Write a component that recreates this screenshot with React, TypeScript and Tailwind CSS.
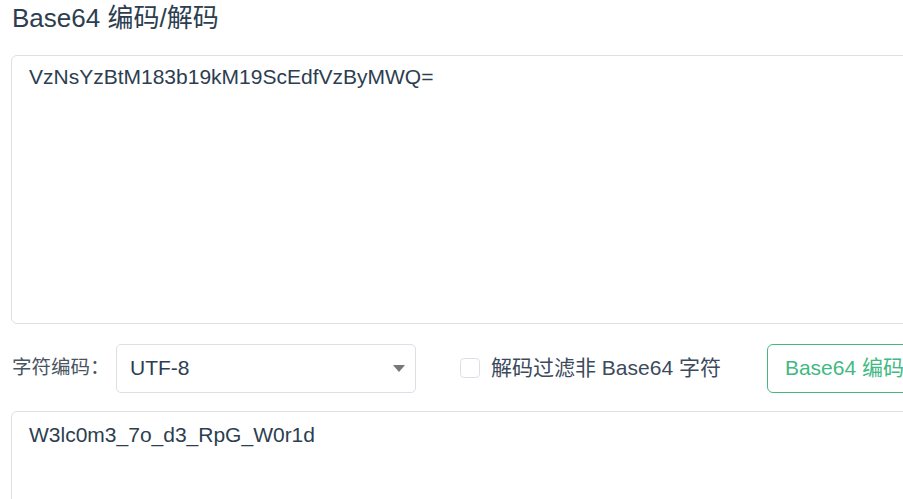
import React from "react";

export default function App() {
  const font = { fontFamily: '"Liberation Sans", Arial, "Noto Sans CJK SC", sans-serif' };
  return (
    <div className="w-[903px] h-[499px] overflow-hidden bg-white" style={font}>
      <div className="w-[1100px] pl-[11px]">
        <h1 className="text-[26px] leading-[34px] text-[#2c3e50] pl-[1px] pt-[1px]">Base64 编码/解码</h1>
        <div className="mt-[20px] h-[269px] border border-[#dcdfe6] rounded-[6px] px-[17px] pt-[8px] text-[21px] leading-[26px] text-[#2c3e50]">
          VzNsYzBtM183b19kM19ScEdfVzByMWQ=
        </div>
        <div className="mt-[19px] flex items-center h-[50px]">
          <span className="text-[19.5px] text-[#4a5563] pl-[1px] w-[105px]">字符编码：</span>
          <div className="w-[300px] h-[49px] border border-[#dcdfe6] rounded-[5px] flex items-center justify-between pl-[13px] pr-[10px]">
            <span className="text-[21px] text-[#2c3e50]">UTF-8</span>
            <span className="w-0 h-0 border-l-[6px] border-r-[6px] border-t-[7px] border-l-transparent border-r-transparent border-t-[#777]"></span>
          </div>
          <div className="ml-[44px] flex items-center">
            <span className="w-[20px] h-[20px] border border-[#dcdfe6] rounded-[4px]"></span>
            <span className="ml-[11px] text-[21px] text-[#3c4a5c]">解码过滤非 Base64 字符</span>
          </div>
          <div className="ml-[46px] h-[49px] border border-[#42b983] rounded-[6px] flex items-center pl-[17px] pr-[17px] text-[21px] text-[#42b983]">
            Base64 编码
          </div>
        </div>
        <div className="mt-[18px] h-[200px] border border-[#dcdfe6] rounded-[6px] px-[17px] pt-[10px] text-[21px] leading-[26px] text-[#2c3e50]">
          W3lc0m3_7o_d3_RpG_W0r1d
        </div>
      </div>
    </div>
  );
}
